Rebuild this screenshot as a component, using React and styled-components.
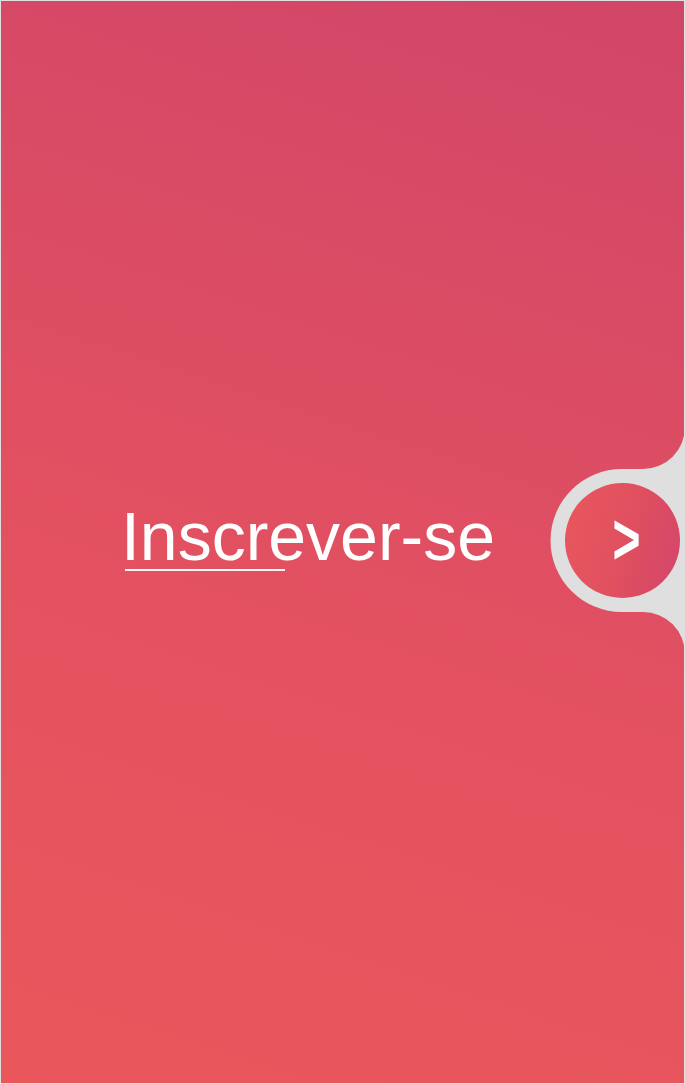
import React from "react"
import styled, { createGlobalStyle } from "styled-components"

const GlobalStyle = createGlobalStyle`
    html, body {
        margin: 0;
        padding: 0;
        background: #e0e0e0;
    }
    #root {
        padding: 1px;
    }
`;

const Panel = styled.section`
    position: relative;
    height: 1082px;
    display: flex;
    flex-direction: row;
    align-items: center;
    background: linear-gradient(18deg, #ea575b 0%, #e45260 40%, #d14568 100%);
    font-family: "Liberation Sans", Arial, sans-serif;
`;

const TitleArea = styled.div`
    flex: 1;
    display: flex;
    justify-content: center;
    padding-left: 50px;
    margin-bottom: 11px;
`;

const TitleBlock = styled.div`
    display: flex;
    flex-direction: column;
    align-items: flex-start;
`;

const Title = styled.h1`
    margin: 0;
    color: #ffffff;
    font-size: 68px;
    font-weight: normal;
    line-height: 68px;
`;

const Underline = styled.div`
    width: 160px;
    height: 2px;
    margin-left: 4px;
    margin-top: -1px;
    background: rgba(255, 255, 255, 0.95);
`;

const Notch = styled.svg`
    position: absolute;
    top: 0;
    right: -1px;
    pointer-events: none;
`;

const NextButton = styled.button`
    position: relative;
    width: 115px;
    height: 115px;
    margin: 0 4px 3px 0;
    padding: 0;
    border: none;
    border-radius: 50%;
    display: flex;
    align-items: center;
    justify-content: center;
    background: linear-gradient(105deg, #ea575c 0%, #e0505f 50%, #d3466a 100%);
    color: #ffffff;
    font-family: "Liberation Sans", Arial, sans-serif;
    font-size: 60px;
    font-weight: 700;
    line-height: 1;
    cursor: pointer;

    &:focus {
        outline: none;
    }
`;

const Chevron = styled.span`
    display: block;
    margin-left: 8px;
    margin-top: -2px;
    transform: scale(0.8, 1.2);
`;

const App = () => {
    return (
        <>
            <GlobalStyle />
            <Panel>
                <Notch width="140" height="1082" viewBox="545 1 140 1082">
                    <path
                        fill="#dfdfdf"
                        d="M685,427 A42,42 0 0,1 643,469 L622,469 A71.5,71.5 0 0,0 622,612 L643,612 A42,42 0 0,1 685,654 Z"
                    />
                </Notch>
                <TitleArea>
                    <TitleBlock>
                        <Title>Inscrever-se</Title>
                        <Underline />
                    </TitleBlock>
                </TitleArea>
                <NextButton aria-label="Próximo">
                    <Chevron>&gt;</Chevron>
                </NextButton>
            </Panel>
        </>
    )
};

export default App;
